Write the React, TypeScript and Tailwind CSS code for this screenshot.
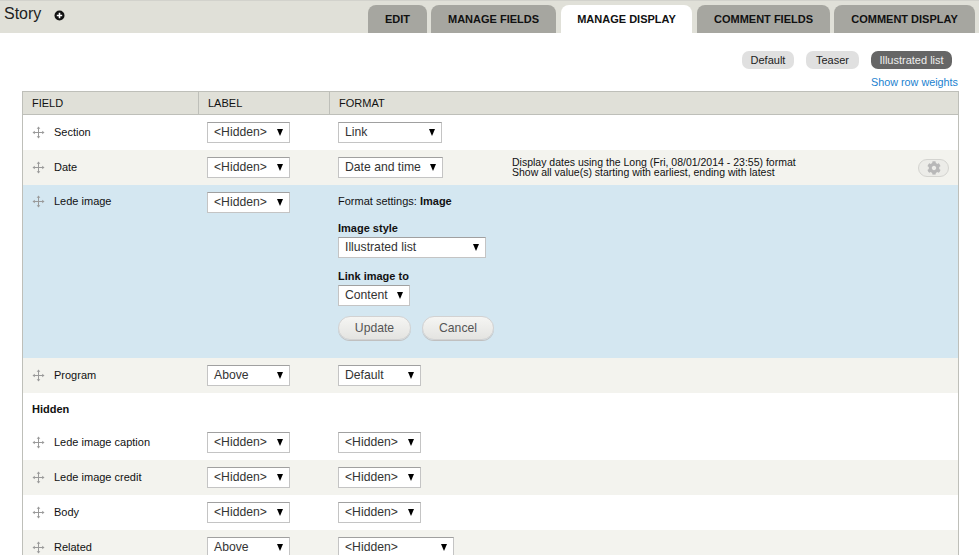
import { FaCog } from "react-icons/fa";

const tabs = [
  { label: "Edit", width: "w-[59px]" },
  { label: "Manage fields", width: "w-[125px]" },
  { label: "Manage display", width: "w-[131px]", active: true },
  { label: "Comment fields", width: "w-[133px]" },
  { label: "Comment display", width: "w-[141px]" },
];

function DragHandle() {
  return (
    <svg width="13" height="13" viewBox="0 0 13 13" className="shrink-0 text-[#9a9a9a]" fill="currentColor">
      <path d="M6.5 .5 8.3 2.8H7V6H10.2V4.7L12.5 6.5 10.2 8.3V7H7V10.2H8.3L6.5 12.5 4.7 10.2H6V7H2.8V8.3L.5 6.5 2.8 4.7V6H6V2.8H4.7Z" />
    </svg>
  );
}

function AddIcon() {
  return (
    <svg width="11" height="11" viewBox="0 0 11 11" className="ml-[13px] mt-[9px]">
      <circle cx="5.5" cy="5.5" r="5" fill="#111" />
      <path d="M5.5 2.8v5.4M2.8 5.5h5.4" stroke="#fff" strokeWidth="1.6" />
    </svg>
  );
}

function FakeSelect({ value, width }: { value: string; width: string }) {
  return (
    <div
      className={`flex h-[21px] items-center justify-between border border-[#c4c4c4] border-t-[#a0a0a0] bg-white pl-[6px] pr-[6px] text-[12.2px] text-[#333] ${width}`}
    >
      <span>{value}</span>
      <span className="h-0 w-0 border-x-[3.5px] border-t-[7px] border-x-transparent border-t-black" />
    </div>
  );
}

function Row({
  name,
  label,
  format,
  formatWidth,
  shaded,
  summary,
}: {
  name: string;
  label: string;
  format: string;
  formatWidth: string;
  shaded?: boolean;
  summary?: boolean;
}) {
  return (
    <div className={`flex h-[35px] items-center ${shaded ? "bg-[#f3f3ee]" : "bg-white"}`}>
      <div className="flex w-[184px] items-center gap-[9px] pl-[9px] text-[11px] text-[#111]">
        <DragHandle />
        {name}
      </div>
      <div className="w-[131px]">
        <FakeSelect value={label} width="w-[83px]" />
      </div>
      <div className="w-[174px]">
        <FakeSelect value={format} width={formatWidth} />
      </div>
      {summary && (
        <>
          <div className="-mt-[2px] w-[406px] text-[10.5px] leading-[10px] text-[#111]">
            <div>Display dates using the Long (Fri, 08/01/2014 - 23:55) format</div>
            <div>Show all value(s) starting with earliest, ending with latest</div>
          </div>
          <button
            type="button"
            className="flex h-[18px] w-[31px] items-center justify-center rounded-full border border-[#d4d4d0] bg-[#ecece8]"
          >
            <FaCog size={14} color="#b8b8b8" />
          </button>
        </>
      )}
    </div>
  );
}

export default function App() {
  return (
    <div className="h-[555px] w-[979px] overflow-hidden bg-white font-['Liberation_Sans',Arial,sans-serif]">
      <div className="flex h-[33px] items-start justify-between border-t border-[#d2d2cc] bg-[#e0e0d8] pl-1 pr-1">
        <div className="flex items-start">
          <h1 className="text-[16px] leading-[25px] text-[#222]">Story</h1>
          <AddIcon />
        </div>
        <div className="mt-1 flex gap-[4px]">
          {tabs.map((tab) => (
            <div
              key={tab.label}
              className={`flex h-[28px] items-center justify-center rounded-t-[8px] text-[11px] font-bold uppercase text-[#111] ${tab.width} ${
                tab.active ? "mx-px bg-white" : "bg-[#a6a6a0]"
              }`}
            >
              {tab.label}
            </div>
          ))}
        </div>
      </div>

      <div className="flex justify-end gap-3 pr-[27px] pt-[18px] text-[11px]">
        <span className="flex h-[18px] w-[52px] items-center justify-center rounded-[7px] bg-[#e0e0e0] text-[#222]">Default</span>
        <span className="flex h-[18px] w-[53px] items-center justify-center rounded-[7px] bg-[#e0e0e0] text-[#222]">Teaser</span>
        <span className="flex h-[18px] w-[81px] items-center justify-center rounded-[7px] bg-[#666] text-[#eee]">Illustrated list</span>
      </div>

      <div className="pr-[21px] pt-[7px] text-right text-[10.8px] leading-[13px] text-[#1a82cf]">Show row weights</div>

      <div className="mx-[22px] mt-[2px] w-[937px] border-x border-t border-[#bebfb9]">
        <div className="flex h-[23px] items-center border-b border-[#bebfb9] bg-[#e0e0d8] text-[11px] uppercase text-[#111]">
          <div className="flex h-full w-[176px] items-center border-r border-[#bebfb9] pl-[9px]">Field</div>
          <div className="flex h-full w-[131px] items-center border-r border-[#bebfb9] pl-[9px]">Label</div>
          <div className="pl-[9px]">Format</div>
        </div>

        <Row name="Section" label="<Hidden>" format="Link" formatWidth="w-[104px]" />
        <Row name="Date" label="<Hidden>" format="Date and time" formatWidth="w-[105px]" shaded summary />

        <div className="flex h-[173px] items-start bg-[#d4e7f1] pt-[7px]">
          <div className="flex h-[19px] w-[184px] items-center gap-[9px] pl-[9px] text-[11px] text-[#111]">
            <DragHandle />
            Lede image
          </div>
          <div className="w-[131px]">
            <FakeSelect value="<Hidden>" width="w-[83px]" />
          </div>
          <div className="text-[11px] text-[#111]">
            <div className="flex h-[18px] items-center">
              Format settings:&nbsp;<strong>Image</strong>
            </div>
            <div className="mt-[12px] font-bold leading-[13px]">Image style</div>
            <div className="mt-[2px]">
              <FakeSelect value="Illustrated list" width="w-[148px]" />
            </div>
            <div className="mt-[12px] font-bold leading-[13px]">Link image to</div>
            <div className="mt-[2px]">
              <FakeSelect value="Content" width="w-[72px]" />
            </div>
            <div className="mt-[10px] flex gap-[11px] text-[12.2px] text-[#555]">
              <button type="button" className="h-[24px] w-[73px] rounded-[12px] border border-[#d2d2d2] bg-gradient-to-b from-[#f5f5f3] to-[#e4e4e1] shadow-[0_1px_0_#c0c0c0]">Update</button>
              <button type="button" className="h-[24px] w-[72px] rounded-[12px] border border-[#d2d2d2] bg-gradient-to-b from-[#f5f5f3] to-[#e4e4e1] shadow-[0_1px_0_#c0c0c0]">Cancel</button>
            </div>
          </div>
        </div>

        <Row name="Program" label="Above" format="Default" formatWidth="w-[83px]" shaded />

        <div className="flex h-[32px] items-center pl-[9px] text-[11px] font-bold text-[#111]">Hidden</div>

        <Row name="Lede image caption" label="<Hidden>" format="<Hidden>" formatWidth="w-[83px]" />
        <Row name="Lede image credit" label="<Hidden>" format="<Hidden>" formatWidth="w-[83px]" shaded />
        <Row name="Body" label="<Hidden>" format="<Hidden>" formatWidth="w-[83px]" />
        <Row name="Related" label="Above" format="<Hidden>" formatWidth="w-[116px]" shaded />
      </div>
    </div>
  );
}
